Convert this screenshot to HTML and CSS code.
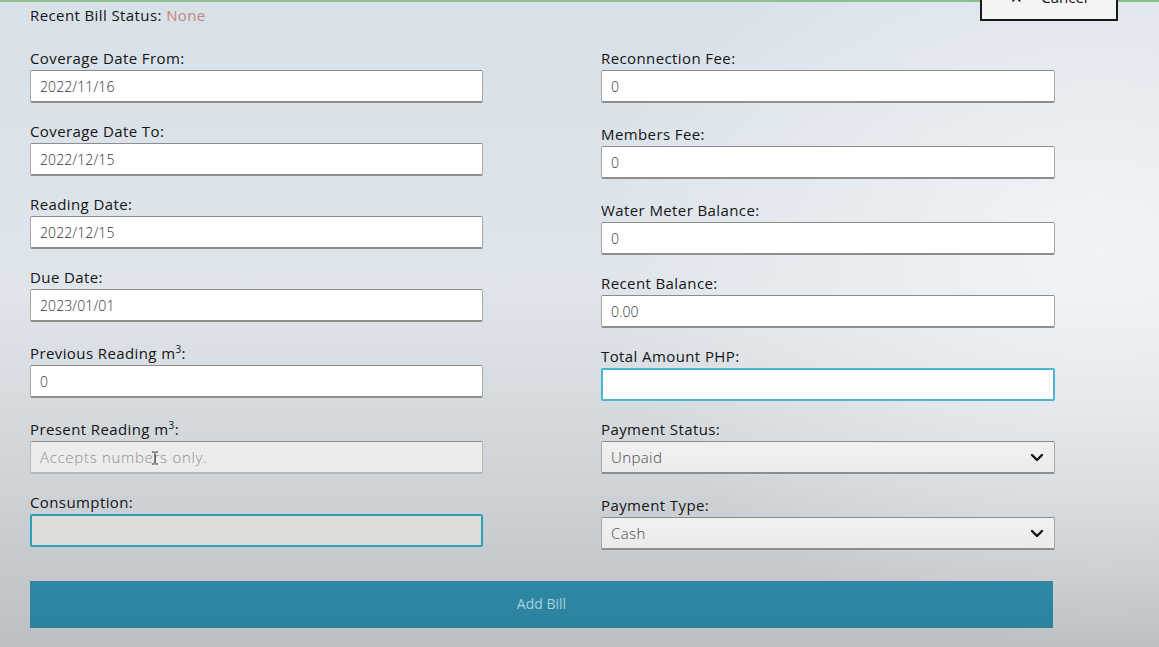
FILE: index.html
```html
<!DOCTYPE html>
<html lang="en">
<head>
<meta charset="utf-8">
<title>Add Bill</title>
<link rel="stylesheet" href="styles.css">
</head>
<body>
<div class="topline"></div>
<main class="page">
  <header class="head">
    <p class="status">Recent Bill Status: <span class="status-val">None</span></p>
    <button class="cancel" type="button"><span class="x">✕</span> Cancel</button>
  </header>
  <form class="form">
    <div class="col">
      <div class="field"><label>Coverage Date From:</label><div class="input">2022/11/16</div></div>
      <div class="field"><label>Coverage Date To:</label><div class="input">2022/12/15</div></div>
      <div class="field"><label>Reading Date:</label><div class="input">2022/12/15</div></div>
      <div class="field"><label>Due Date:</label><div class="input">2023/01/01</div></div>
      <div class="field more"><label>Previous Reading m<sup>3</sup>:</label><div class="input">0</div></div>
      <div class="field more"><label>Present Reading m<sup>3</sup>:</label><div class="input disabled"><span class="ph">Accepts numbers only.</span><svg class="ibeam" width="8" height="14" viewBox="0 0 8 14"><path d="M1 1h2.5M4.5 1H7M4 1.5v11M1 13h2.5M4.5 13H7" stroke="#222" stroke-width="1" fill="none"/></svg></div></div>
      <div class="field"><label>Consumption:</label><div class="input consumption"></div></div>
    </div>
    <div class="col">
      <div class="field"><label>Reconnection Fee:</label><div class="input">0</div></div>
      <div class="field more"><label>Members Fee:</label><div class="input">0</div></div>
      <div class="field more"><label>Water Meter Balance:</label><div class="input">0</div></div>
      <div class="field"><label>Recent Balance:</label><div class="input">0.00</div></div>
      <div class="field"><label>Total Amount PHP:</label><div class="input focus"></div></div>
      <div class="field"><label>Payment Status:</label><div class="input select"><span>Unpaid</span><svg width="14" height="9" viewBox="0 0 14 9"><path d="M2 2l5 5 5-5" stroke="#111" stroke-width="2.4" fill="none" stroke-linecap="round" stroke-linejoin="round"/></svg></div></div>
      <div class="field more"><label>Payment Type:</label><div class="input select"><span>Cash</span><svg width="14" height="9" viewBox="0 0 14 9"><path d="M2 2l5 5 5-5" stroke="#111" stroke-width="2.4" fill="none" stroke-linecap="round" stroke-linejoin="round"/></svg></div></div>
    </div>
    <button class="add" type="button">Add Bill</button>
  </form>
</main>
</body>
</html>
```
FILE: styles.css
```css
* { box-sizing: border-box; }
html, body { height: 100%; }
body {
  margin: 0;
  overflow: hidden;
  font-family: "Open Sans", "Noto Sans", sans-serif;
  font-size: 15px;
  letter-spacing: 0.4px;
  color: #151515;
  background:
    radial-gradient(ellipse 500px 400px at 1100px 250px, rgba(246,248,250,0.8), rgba(246,248,250,0) 100%),
    linear-gradient(to bottom, #d8e0e8 0%, #dfe5eb 45%, #cfd3d7 75%, #bcc0c3 100%);
}
.topline { height: 2px; background: #8cc08c; }
.page { padding: 0 0 0 30px; }
.head {
  display: flex;
  justify-content: space-between;
  align-items: flex-start;
  width: 1088px;
  height: 38px;
}
.status { margin: 4px 0 0; line-height: 18px; }
.status-val { color: #c3877a; }
.cancel {
  margin-top: -29px;
  width: 138px;
  height: 48px;
  border: 2px solid #1a1a1a;
  background: #f3f4f5;
  font: 15px "Open Sans", sans-serif;
  color: #111;
  padding: 0;
}
.cancel .x { margin-right: 14px; }
.form {
  display: grid;
  grid-template-columns: 453px 454px;
  column-gap: 118px;
  width: 1025px;
  margin-top: 9px;
}
.col { display: flex; flex-direction: column; gap: 19px; }
.field { display: flex; flex-direction: column; }
.field.more { margin-top: 3px; }
.field label {
  line-height: 18px;
  height: 18px;
  margin-bottom: 3px;
  color: #151515;
}
.field sup { font-size: 10px; line-height: 0; vertical-align: 6px; }
.input {
  position: relative;
  height: 33px;
  background: #fff;
  border: 1px solid #a9a9a9;
  border-top-color: #8c8c8c;
  border-bottom: 2px solid #8e8e8e;
  border-radius: 2px;
  padding: 0 9px;
  display: flex;
  align-items: center;
  color: #333;
  font-size: 14px;
  letter-spacing: 0.1px;
  font-weight: 300;
}
.input.disabled { background: #ececec; border-color: #b8b8b8; border-top-color: #8c8c8c; }
.ph { color: #8f8f8f; font-size: 15px; letter-spacing: 0.7px; }
.ibeam { position: absolute; left: 120px; top: 9px; }
.input.consumption { background: #dcdcd9; border: 2px solid #2b9fb5; }
.input.focus { border: 2px solid #48b8d2; }
.input.select {
  background: linear-gradient(#f1f1f1, #ebebeb);
  justify-content: space-between;
  color: #4a4a4a;
  font-size: 15px;
  letter-spacing: 0.4px;
  padding-right: 10px;
}
.add {
  grid-column: 1 / -1;
  margin-top: 31px;
  width: 1023px;
  height: 47px;
  border: 0;
  border-top: 1px solid #4d7a9a;
  background: linear-gradient(#2d88a4, #2c829e);
  color: #a9d0dd;
  font: 14px "Open Sans", sans-serif;
  padding-bottom: 4px;
}
```
